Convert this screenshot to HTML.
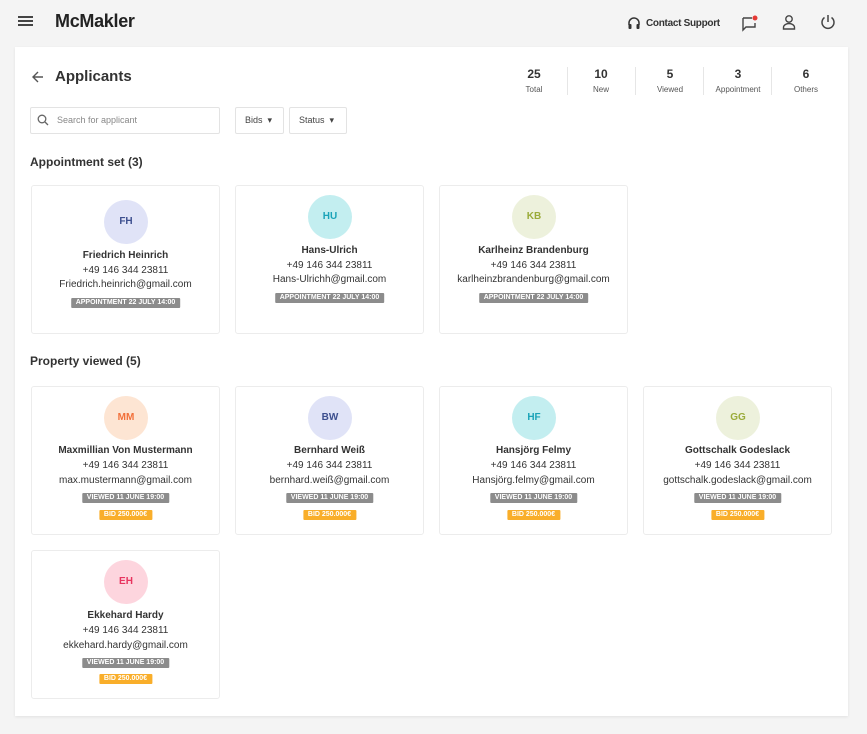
<!DOCTYPE html>
<html><head><meta charset="utf-8"><style>
*{box-sizing:border-box;margin:0;padding:0}
body{width:867px;height:734px;background:#f4f4f4;font-family:"Liberation Sans",sans-serif;color:#333;position:relative;overflow:hidden}
.abs{position:absolute}
.panel{position:absolute;left:15px;top:47px;width:833px;height:669px;background:#fff;box-shadow:0 1px 3px rgba(0,0,0,.08)}
.card{position:absolute;width:189px;height:149px;border:1px solid #ececec;border-radius:3px;background:#fff;text-align:center}
.card .av{position:absolute;left:72px;width:44px;height:44px;border-radius:50%;font-size:10px;font-weight:bold;line-height:44px}
.card .l{position:absolute;left:0;right:0;font-size:10px;line-height:12px;color:#333}
.card .n{font-weight:bold}
.badge{position:absolute;left:50%;transform:translateX(-50%);font-size:7px;font-weight:bold;color:#fff;background:#8c8c8c;padding:0 5px;line-height:10px;height:10px;border-radius:1px;white-space:nowrap}
.bid{background:#f9ae2a}
.stat{position:absolute;top:68px;width:68px;text-align:center;line-height:13px}
.stat b{display:block;font-size:12px;color:#333}
.stat span{font-size:8px;color:#555;line-height:14px}
.sep{position:absolute;top:67px;width:1px;height:28px;background:#e6e6e6}
h2{position:absolute;left:30px;font-size:12px;font-weight:bold;color:#333}
.btn{position:absolute;top:107px;height:27px;border:1px solid #e3e3e3;border-radius:2px;font-size:9px;color:#444;line-height:25px;padding-left:9px}
</style></head><body>
<div class="abs" style="left:18px;top:16px;width:15px;height:2px;background:#444;box-shadow:0 4px 0 #444,0 8px 0 #444"></div>
<div class="abs" style="left:55px;top:11px;font-size:18px;font-weight:bold;color:#222;letter-spacing:-0.3px">McMakler</div>
<svg class="abs" style="left:627px;top:16px" width="14" height="14" viewBox="0 0 14 14"><path d="M2 9V7a5 5 0 0 1 10 0v2" fill="none" stroke="#333" stroke-width="1.5"/><rect x="1.5" y="8" width="3" height="5" rx="1" fill="#333"/><rect x="9.5" y="8" width="3" height="5" rx="1" fill="#333"/></svg>
<div class="abs" style="left:646px;top:18px;font-size:10px;font-weight:bold;color:#333;letter-spacing:-0.3px">Contact Support</div>
<svg class="abs" style="left:741px;top:14px" width="18" height="18" viewBox="0 0 18 18"><path d="M2 4h9M2 4v12l3-3h9V9" fill="none" stroke="#444" stroke-width="1.4"/><circle cx="14" cy="4" r="2.5" fill="#e53935"/></svg>
<svg class="abs" style="left:781px;top:14px" width="16" height="16" viewBox="0 0 16 16"><circle cx="8" cy="5" r="3.2" fill="none" stroke="#444" stroke-width="1.4"/><path d="M2.5 15v-1.5a5.5 4 0 0 1 11 0V15z" fill="none" stroke="#444" stroke-width="1.4"/></svg>
<svg class="abs" style="left:820px;top:14px" width="16" height="16" viewBox="0 0 16 16"><path d="M8 1v7M4.5 3.5a6 6 0 1 0 7 0" fill="none" stroke="#444" stroke-width="1.5"/></svg>

<div class="panel"></div>
<svg class="abs" style="left:31px;top:70px" width="14" height="14" viewBox="0 0 14 14"><path d="M12 7H2M7 2L2 7l5 5" fill="none" stroke="#555" stroke-width="1.4"/></svg>
<div class="abs" style="left:55px;top:68px;font-size:15px;font-weight:bold;color:#333">Applicants</div>
<div class="stat" style="left:500px"><b>25</b><span>Total</span></div>
<div class="sep" style="left:567px"></div>
<div class="stat" style="left:567px"><b>10</b><span>New</span></div>
<div class="sep" style="left:635px"></div>
<div class="stat" style="left:636px"><b>5</b><span>Viewed</span></div>
<div class="sep" style="left:703px"></div>
<div class="stat" style="left:704px"><b>3</b><span>Appointment</span></div>
<div class="sep" style="left:771px"></div>
<div class="stat" style="left:772px"><b>6</b><span>Others</span></div>

<div class="btn" style="left:30px;width:190px;padding-left:26px;color:#888">Search for applicant</div>
<svg class="abs" style="left:37px;top:114px" width="12" height="12" viewBox="0 0 12 12"><circle cx="5" cy="5" r="3.8" fill="none" stroke="#666" stroke-width="1.3"/><path d="M8 8l3 3" stroke="#666" stroke-width="1.3"/></svg>
<div class="btn" style="left:235px;width:49px">Bids &nbsp;▾</div>
<div class="btn" style="left:289px;width:58px">Status &nbsp;▾</div>

<h2 style="top:155px">Appointment set (3)</h2>
<h2 style="top:354px">Property viewed (5)</h2>

<div class="card" style="left:31px;top:185px">
<div class="av" style="top:14px;background:#e0e3f7;color:#3d4f8f">FH</div>
<div class="l n" style="top:64px">Friedrich Heinrich</div>
<div class="l" style="top:79px">+49 146 344 23811</div>
<div class="l" style="top:93px">Friedrich.heinrich@gmail.com</div>
<div class="badge" style="top:112px">APPOINTMENT 22 JULY 14:00</div></div>
<div class="card" style="left:235px;top:185px">
<div class="av" style="top:9px;background:#c3eef0;color:#1aa3b8">HU</div>
<div class="l n" style="top:59px">Hans-Ulrich</div>
<div class="l" style="top:74px">+49 146 344 23811</div>
<div class="l" style="top:88px">Hans-Ulrichh@gmail.com</div>
<div class="badge" style="top:107px">APPOINTMENT 22 JULY 14:00</div></div>
<div class="card" style="left:439px;top:185px">
<div class="av" style="top:9px;background:#edf1dc;color:#9aab3a">KB</div>
<div class="l n" style="top:59px">Karlheinz Brandenburg</div>
<div class="l" style="top:74px">+49 146 344 23811</div>
<div class="l" style="top:88px">karlheinzbrandenburg@gmail.com</div>
<div class="badge" style="top:107px">APPOINTMENT 22 JULY 14:00</div></div>

<div class="card" style="left:31px;top:386px">
<div class="av" style="top:9px;background:#fde5d3;color:#f2703a">MM</div>
<div class="l n" style="top:58px">Maxmillian Von Mustermann</div>
<div class="l" style="top:73px">+49 146 344 23811</div>
<div class="l" style="top:88px">max.mustermann@gmail.com</div>
<div class="badge" style="top:106px">VIEWED 11 JUNE 19:00</div>
<div class="badge bid" style="top:123px">BID 250.000€</div></div>
<div class="card" style="left:235px;top:386px">
<div class="av" style="top:9px;background:#e0e3f7;color:#3d4f8f">BW</div>
<div class="l n" style="top:58px">Bernhard Weiß</div>
<div class="l" style="top:73px">+49 146 344 23811</div>
<div class="l" style="top:88px">bernhard.weiß@gmail.com</div>
<div class="badge" style="top:106px">VIEWED 11 JUNE 19:00</div>
<div class="badge bid" style="top:123px">BID 250.000€</div></div>
<div class="card" style="left:439px;top:386px">
<div class="av" style="top:9px;background:#c3eef0;color:#1aa3b8">HF</div>
<div class="l n" style="top:58px">Hansjörg Felmy</div>
<div class="l" style="top:73px">+49 146 344 23811</div>
<div class="l" style="top:88px">Hansjörg.felmy@gmail.com</div>
<div class="badge" style="top:106px">VIEWED 11 JUNE 19:00</div>
<div class="badge bid" style="top:123px">BID 250.000€</div></div>
<div class="card" style="left:643px;top:386px">
<div class="av" style="top:9px;background:#edf1dc;color:#9aab3a">GG</div>
<div class="l n" style="top:58px">Gottschalk Godeslack</div>
<div class="l" style="top:73px">+49 146 344 23811</div>
<div class="l" style="top:88px">gottschalk.godeslack@gmail.com</div>
<div class="badge" style="top:106px">VIEWED 11 JUNE 19:00</div>
<div class="badge bid" style="top:123px">BID 250.000€</div></div>

<div class="card" style="left:31px;top:550px">
<div class="av" style="top:9px;background:#fdd5de;color:#e8345f">EH</div>
<div class="l n" style="top:59px">Ekkehard Hardy</div>
<div class="l" style="top:74px">+49 146 344 23811</div>
<div class="l" style="top:89px">ekkehard.hardy@gmail.com</div>
<div class="badge" style="top:107px">VIEWED 11 JUNE 19:00</div>
<div class="badge bid" style="top:123px">BID 250.000€</div></div>
</body></html>
